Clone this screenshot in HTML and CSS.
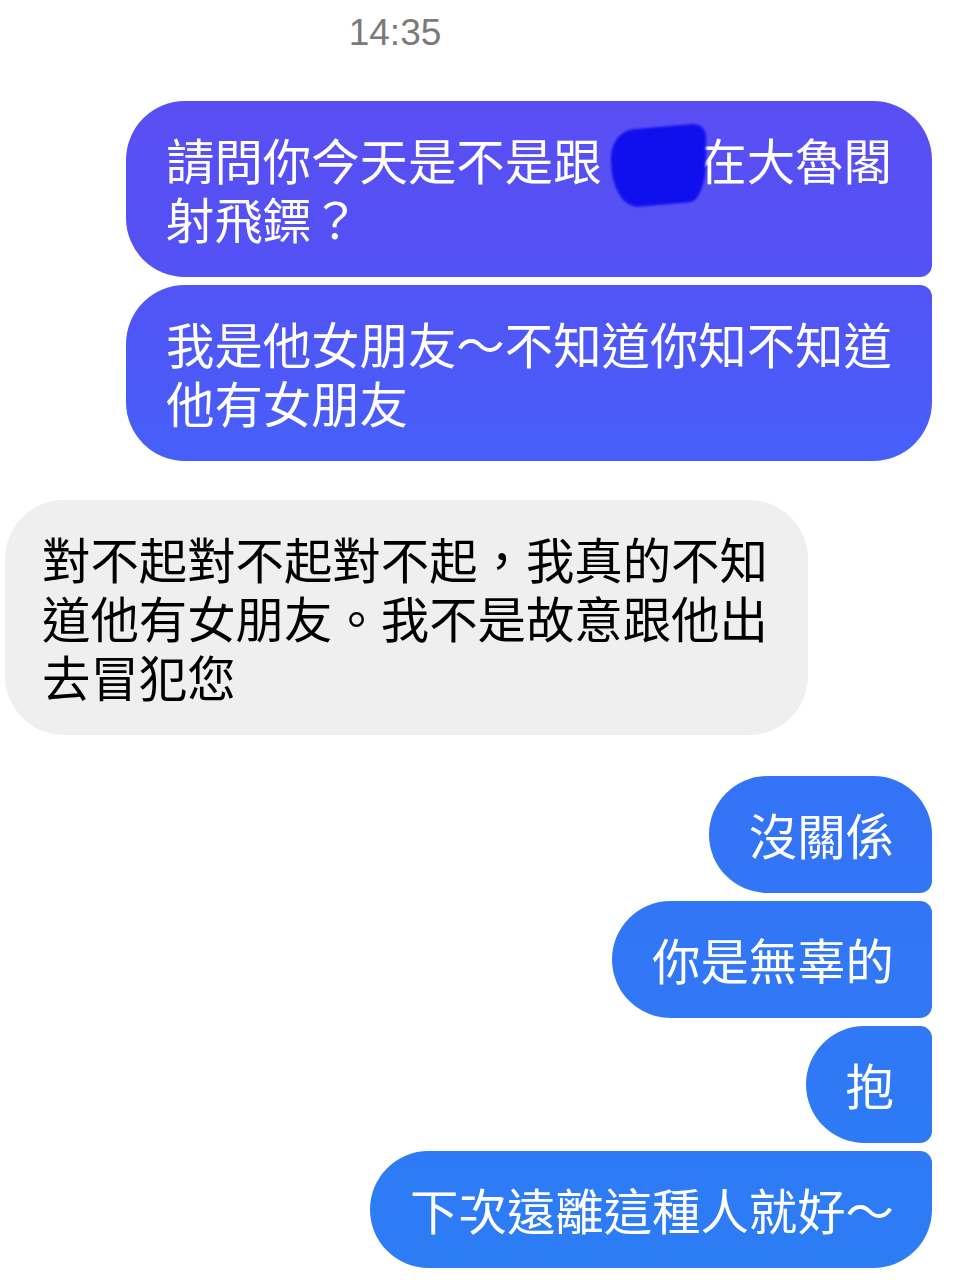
FILE: index.html
```html
<!DOCTYPE html>
<html lang="zh-Hant">
<head>
  <meta charset="UTF-8" />
  <meta name="viewport" content="width=device-width, initial-scale=1.0"/>
  <title>Messenger</title>
  <link rel="stylesheet" href="styles.css">
</head>
<body>
  <div class="chat">
    <div class="time">14:35</div>

    <div class="row me">
      <div class="bubble sent first">請問你今天是不是跟<span class="redact"></span>在大魯閣射飛鏢？</div>
    </div>
    <div class="row me">
      <div class="bubble sent last">我是他女朋友～不知道你知不知道他有女朋友</div>
    </div>

    <div class="row them">
      <div class="bubble received">對不起對不起對不起，我真的不知道他有女朋友。我不是故意跟他出去冒犯您</div>
    </div>

    <div class="group">
      <div class="row me">
        <div class="bubble sent first">沒關係</div>
      </div>
      <div class="row me">
        <div class="bubble sent middle">你是無辜的</div>
      </div>
      <div class="row me">
        <div class="bubble sent middle">抱</div>
      </div>
      <div class="row me gap">
        <div class="bubble sent last">下次遠離這種人就好～</div>
      </div>
    </div>
  </div>
</body>
</html>
```

FILE: styles.css
```css
body {
  margin: 0;
  background: #fff;
  font-family: "Noto Sans CJK TC", "Noto Sans CJK SC", sans-serif;
}
.chat {
  display: flex;
  flex-direction: column;
  padding: 0 25px 0 5px;
}
.time {
  margin: 13px 0 48px;
  padding-right: 147px;
  text-align: center;
  font-family: "Liberation Sans", Arial, sans-serif;
  font-size: 37px;
  line-height: 40px;
  color: #7a7a7a;
}
.row {
  display: flex;
}
.row.me {
  justify-content: flex-end;
}
.row.me + .row.me {
  margin-top: 8px;
}
.row.me.gap {
  margin-top: 12px;
}
.row.them {
  justify-content: flex-start;
  margin-top: 39px;
}
.group {
  display: flex;
  flex-direction: column;
  margin-top: 41px;
}
.bubble {
  box-sizing: border-box;
  font-size: 48.4px;
  line-height: 59px;
  padding: 29px 38px 29px 40px;
  border-radius: 59px;
}
.sent {
  max-width: 806px;
  color: #fff;
  background: linear-gradient(180deg, #5d4cf4 0px, #5451f5 250px, #4660fa 470px, #3473f6 780px, #2c7df5 1280px) fixed;
}
.sent.first {
  border-bottom-right-radius: 12px;
}
.sent.middle {
  border-top-right-radius: 12px;
  border-bottom-right-radius: 12px;
}
.sent.last {
  border-top-right-radius: 12px;
}
.received {
  max-width: 803px;
  padding-left: 37px;
  background: #efefef;
  color: #000;
}

/* scribbled-out name */
.redact {
  display: inline-block;
  position: relative;
  width: 2em;
  height: 59px;
  vertical-align: top;
}
.redact::before {
  content: "";
  position: absolute;
  left: 9px;
  top: -3px;
  width: 95px;
  height: 78px;
  background: #1010ee;
  border-radius: 22px 14px 16px 28px / 26px 14px 40px 48px;
  transform: skewY(-5deg);
  filter: blur(0.8px);
}
```
